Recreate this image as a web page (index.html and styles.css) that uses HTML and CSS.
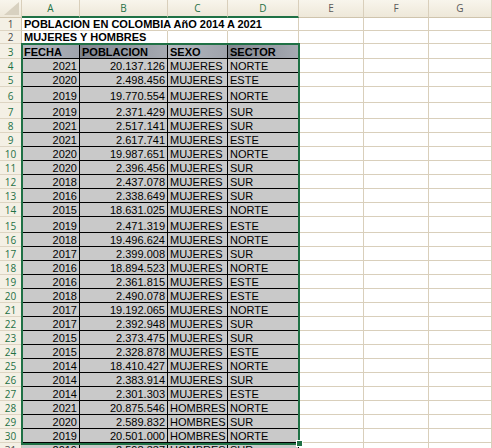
FILE: index.html
```html
<!DOCTYPE html>
<html lang="es">
<head>
<meta charset="utf-8">
<title>Poblacion</title>
<link rel="stylesheet" href="styles.css">
</head>
<body>
<div class="sheet">
  <div class="row hdr">
    <div class="ch corner"><svg width="21" height="17" viewBox="0 0 21 17"><polygon points="4,15 19,15 19,2" fill="#d8d1c0"/></svg></div>
    <div class="ch sel">A</div><div class="ch sel">B</div><div class="ch sel">C</div><div class="ch sel">D</div>
    <div class="ch">E</div><div class="ch">F</div><div class="ch">G</div>
  </div>
  <div class="row h13"><div class="c rh">1</div><div class="c b nb">POBLACION EN COLOMBIA AñO 2014 A 2021</div><div class="c nb"></div><div class="c nb"></div><div class="c"></div><div class="c"></div><div class="c"></div><div class="c"></div></div>
  <div class="row h13"><div class="c rh">2</div><div class="c b nb">MUJERES Y HOMBRES</div><div class="c"></div><div class="c"></div><div class="c"></div><div class="c"></div><div class="c"></div><div class="c"></div></div>
  <div class="row h15"><div class="c rh s">3</div><div class="c d th">FECHA</div><div class="c d th th2">POBLACION</div><div class="c d th">SEXO</div><div class="c d th th2">SECTOR</div><div class="c"></div><div class="c"></div><div class="c"></div></div>
  <div class="row h14"><div class="c rh s">4</div><div class="c d n">2021</div><div class="c d n">20.137.126</div><div class="c d">MUJERES</div><div class="c d">NORTE</div><div class="c"></div><div class="c"></div><div class="c"></div></div>
  <div class="row h14"><div class="c rh s">5</div><div class="c d n">2020</div><div class="c d n">2.498.456</div><div class="c d">MUJERES</div><div class="c d">ESTE</div><div class="c"></div><div class="c"></div><div class="c"></div></div>
  <div class="row h16"><div class="c rh s">6</div><div class="c d n">2019</div><div class="c d n">19.770.554</div><div class="c d">MUJERES</div><div class="c d">NORTE</div><div class="c"></div><div class="c"></div><div class="c"></div></div>
  <div class="row h16"><div class="c rh s">7</div><div class="c d n">2019</div><div class="c d n">2.371.429</div><div class="c d">MUJERES</div><div class="c d">SUR</div><div class="c"></div><div class="c"></div><div class="c"></div></div>
  <div class="row h14"><div class="c rh s">8</div><div class="c d n">2021</div><div class="c d n">2.517.141</div><div class="c d">MUJERES</div><div class="c d">SUR</div><div class="c"></div><div class="c"></div><div class="c"></div></div>
  <div class="row h14"><div class="c rh s">9</div><div class="c d n">2021</div><div class="c d n">2.617.741</div><div class="c d">MUJERES</div><div class="c d">ESTE</div><div class="c"></div><div class="c"></div><div class="c"></div></div>
  <div class="row h14"><div class="c rh s">10</div><div class="c d n">2020</div><div class="c d n">19.987.651</div><div class="c d">MUJERES</div><div class="c d">NORTE</div><div class="c"></div><div class="c"></div><div class="c"></div></div>
  <div class="row h14"><div class="c rh s">11</div><div class="c d n">2020</div><div class="c d n">2.396.456</div><div class="c d">MUJERES</div><div class="c d">SUR</div><div class="c"></div><div class="c"></div><div class="c"></div></div>
  <div class="row h14"><div class="c rh s">12</div><div class="c d n">2018</div><div class="c d n">2.437.078</div><div class="c d">MUJERES</div><div class="c d">SUR</div><div class="c"></div><div class="c"></div><div class="c"></div></div>
  <div class="row h14"><div class="c rh s">13</div><div class="c d n">2016</div><div class="c d n">2.338.649</div><div class="c d">MUJERES</div><div class="c d">SUR</div><div class="c"></div><div class="c"></div><div class="c"></div></div>
  <div class="row h14"><div class="c rh s">14</div><div class="c d n">2015</div><div class="c d n">18.631.025</div><div class="c d">MUJERES</div><div class="c d">NORTE</div><div class="c"></div><div class="c"></div><div class="c"></div></div>
  <div class="row h16"><div class="c rh s">15</div><div class="c d n">2019</div><div class="c d n">2.471.319</div><div class="c d">MUJERES</div><div class="c d">ESTE</div><div class="c"></div><div class="c"></div><div class="c"></div></div>
  <div class="row h14"><div class="c rh s">16</div><div class="c d n">2018</div><div class="c d n">19.496.624</div><div class="c d">MUJERES</div><div class="c d">NORTE</div><div class="c"></div><div class="c"></div><div class="c"></div></div>
  <div class="row h14"><div class="c rh s">17</div><div class="c d n">2017</div><div class="c d n">2.399.008</div><div class="c d">MUJERES</div><div class="c d">SUR</div><div class="c"></div><div class="c"></div><div class="c"></div></div>
  <div class="row h14"><div class="c rh s">18</div><div class="c d n">2016</div><div class="c d n">18.894.523</div><div class="c d">MUJERES</div><div class="c d">NORTE</div><div class="c"></div><div class="c"></div><div class="c"></div></div>
  <div class="row h14"><div class="c rh s">19</div><div class="c d n">2016</div><div class="c d n">2.361.815</div><div class="c d">MUJERES</div><div class="c d">ESTE</div><div class="c"></div><div class="c"></div><div class="c"></div></div>
  <div class="row h14"><div class="c rh s">20</div><div class="c d n">2018</div><div class="c d n">2.490.078</div><div class="c d">MUJERES</div><div class="c d">ESTE</div><div class="c"></div><div class="c"></div><div class="c"></div></div>
  <div class="row h14"><div class="c rh s">21</div><div class="c d n">2017</div><div class="c d n">19.192.065</div><div class="c d">MUJERES</div><div class="c d">NORTE</div><div class="c"></div><div class="c"></div><div class="c"></div></div>
  <div class="row h14"><div class="c rh s">22</div><div class="c d n">2017</div><div class="c d n">2.392.948</div><div class="c d">MUJERES</div><div class="c d">SUR</div><div class="c"></div><div class="c"></div><div class="c"></div></div>
  <div class="row h14"><div class="c rh s">23</div><div class="c d n">2015</div><div class="c d n">2.373.475</div><div class="c d">MUJERES</div><div class="c d">SUR</div><div class="c"></div><div class="c"></div><div class="c"></div></div>
  <div class="row h14"><div class="c rh s">24</div><div class="c d n">2015</div><div class="c d n">2.328.878</div><div class="c d">MUJERES</div><div class="c d">ESTE</div><div class="c"></div><div class="c"></div><div class="c"></div></div>
  <div class="row h14"><div class="c rh s">25</div><div class="c d n">2014</div><div class="c d n">18.410.427</div><div class="c d">MUJERES</div><div class="c d">NORTE</div><div class="c"></div><div class="c"></div><div class="c"></div></div>
  <div class="row h14"><div class="c rh s">26</div><div class="c d n">2014</div><div class="c d n">2.383.914</div><div class="c d">MUJERES</div><div class="c d">SUR</div><div class="c"></div><div class="c"></div><div class="c"></div></div>
  <div class="row h14"><div class="c rh s">27</div><div class="c d n">2014</div><div class="c d n">2.301.303</div><div class="c d">MUJERES</div><div class="c d">ESTE</div><div class="c"></div><div class="c"></div><div class="c"></div></div>
  <div class="row h14"><div class="c rh s">28</div><div class="c d n">2021</div><div class="c d n">20.875.546</div><div class="c d">HOMBRES</div><div class="c d">NORTE</div><div class="c"></div><div class="c"></div><div class="c"></div></div>
  <div class="row h14"><div class="c rh s">29</div><div class="c d n">2020</div><div class="c d n">2.589.832</div><div class="c d">HOMBRES</div><div class="c d">SUR</div><div class="c"></div><div class="c"></div><div class="c"></div></div>
  <div class="row h14"><div class="c rh s">30</div><div class="c d n">2019</div><div class="c d n">20.501.000</div><div class="c d">HOMBRES</div><div class="c d">NORTE</div><div class="c"></div><div class="c"></div><div class="c"></div></div>
  <div class="row h14"><div class="c rh">31</div><div class="c d n">2019</div><div class="c d n">2.598.337</div><div class="c d">HOMBRES</div><div class="c d">SUR</div><div class="c"></div><div class="c"></div><div class="c"></div></div>
  <div class="selection"></div>
  <div class="handle"></div>
</div>
</body>
</html>
```

FILE: styles.css
```css
* { box-sizing: border-box; }
html, body { margin: 0; padding: 0; background: #fff; }
body {
  width: 492px;
  height: 448px;
  overflow: hidden;
  font-family: "Liberation Sans", Arial, sans-serif;
  font-size: 11px;
  color: #000;
}
.sheet { position: relative; width: 492px; }
.row {
  display: grid;
  grid-template-columns: 22px 58px 88px 60px 71px 65px 65px 63px;
}
.hdr { height: 18px; }
.h13 { height: 13px; }
.h14 { height: 14px; }
.h15 { height: 15px; }
.h16 { height: 16px; }

.ch {
  display: flex;
  align-items: center;
  justify-content: center;
  background: linear-gradient(#f8f5ec, #eee8d9);
  border-right: 1px solid #d9cfbb;
  border-bottom: 1px solid #cfc4ad;
  font-family: "Open Sans", "Liberation Sans", sans-serif;
  font-size: 10px;
  color: #5a5a5a;
  padding-bottom: 1px;
}
.ch.sel { color: #1f7145; border-bottom: 2px solid #1f7145; padding-bottom: 0; }
.corner { align-items: stretch; justify-content: stretch; padding: 0; }
.corner svg { display: block; }

.c {
  display: flex;
  align-items: flex-end;
  padding: 0 2px;
  line-height: 11px;
  white-space: nowrap;
  min-width: 0;
  border-right: 1px solid #d9cfbb;
  border-bottom: 1px solid #d9cfbb;
}
.rh {
  justify-content: center;
  background: #f4f0e5;
  border-right-color: #cfc4ad;
  border-bottom-color: #ddd4c2;
  font-family: "Open Sans", "Liberation Sans", sans-serif;
  font-size: 10px;
  color: #4a4a4a;
}
.rh.s { color: #1f7145; }
.b { font-weight: bold; }
.nb { border-right-color: transparent; }

.d {
  background: #c9c9c9;
  border-right-color: #000;
  border-bottom-color: #000;
}
.n { justify-content: flex-end; }
.th {
  font-weight: bold;
  background: linear-gradient(to right, #b3b7bf, #9fa3ac);
}
.th2 { background: linear-gradient(to right, #80858f, #a6aab2); }

.selection {
  position: absolute;
  left: 21px;
  top: 43px;
  width: 279px;
  height: 402px;
  border: 2px solid #1f7145;
  pointer-events: none;
}
.handle {
  position: absolute;
  left: 296px;
  top: 440px;
  width: 7px;
  height: 7px;
  background: #1f7145;
  border: 1px solid #fff;
}
```
